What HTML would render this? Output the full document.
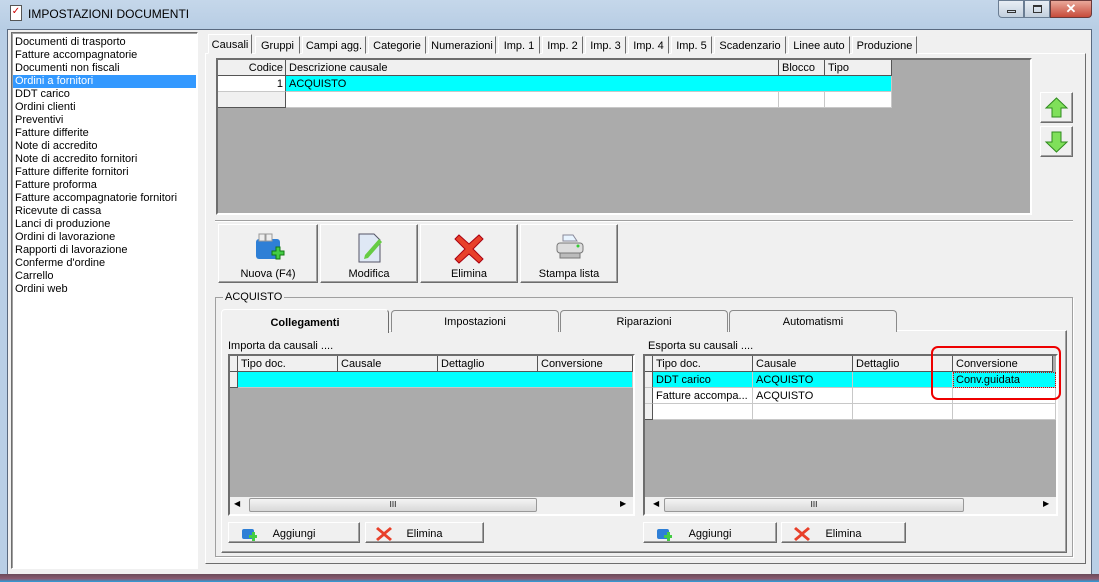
<!DOCTYPE html>
<html><head><meta charset="utf-8"><style>
*{box-sizing:border-box;margin:0;padding:0}
body{width:1099px;height:582px;overflow:hidden;background:#b9cfe6;font-family:"Liberation Sans",sans-serif;font-size:11px;color:#000;position:relative}
.a{position:absolute}
.btn{background:#f0f0f0;border:1px solid;border-color:#fff #6d6d6d #6d6d6d #fff;box-shadow:inset -1px -1px 0 #a0a0a0}
.grid{background:#ababab;border:2px solid;border-color:#6d6d6d #fff #fff #6d6d6d}
.c{position:absolute;border-right:1px solid #c8c8c8;border-bottom:1px solid #c8c8c8;padding-left:3px;line-height:16px;height:16px;white-space:nowrap;overflow:hidden}
.h{background:#f0f0f0;border-right:1px solid #555;border-bottom:1px solid #555}
.tab{position:absolute;top:36px;height:18px;line-height:19px;text-align:center;border:1px solid;border-color:#fff #6d6d6d transparent #fff;background:#f0f0f0;font-size:11px}
.st{position:absolute;top:310px;height:22px;line-height:23px;text-align:center;border:1px solid #8a8a8a;border-bottom:none;border-radius:4px 4px 0 0;background:#f0f0f0}
.sb{line-height:22px!important}
</style></head><body>
<div class="a" style="left:0;top:0;width:1099px;height:30px;background:linear-gradient(#c5d7ea,#b7cde4)"></div>
<div class="a" style="left:10px;top:5px;width:12px;height:16px;border:1px solid #555;background:#fff;color:#c00;font-size:10px;line-height:12px;text-align:center">✓</div>
<div class="a" style="left:28px;top:7px;font-size:12px">IMPOSTAZIONI DOCUMENTI</div>
<div class="a" style="left:998px;top:0;width:26px;height:18px;border:1px solid #6a7d93;border-radius:0 0 0 4px;background:linear-gradient(#e8eef5,#c3d0de)"><div class="a" style="left:8px;top:9px;width:9px;height:3px;border:1px solid #333"></div></div>
<div class="a" style="left:1024px;top:0;width:26px;height:18px;border:1px solid #6a7d93;background:linear-gradient(#e8eef5,#c3d0de)"><div class="a" style="left:8px;top:4px;width:9px;height:8px;border:1px solid #333;border-top-width:2px"></div></div>
<div class="a" style="left:1050px;top:0;width:42px;height:18px;border:1px solid #6a3a3a;border-radius:0 0 4px 0;background:linear-gradient(#e9a89a,#c74b3a);color:#fff;font-weight:bold;font-size:13px;text-align:center;line-height:16px">✕</div>
<div class="a" style="left:7px;top:29px;width:1085px;height:546px;background:#f0f0f0;border:1px solid #5a6a80"></div>
<div class="a" style="left:0;top:574px;width:1099px;height:8px;background:linear-gradient(#6a4a5a,#8a5a70 60%,#2aa0e0)"></div>

<div class="a" style="left:11px;top:32px;width:187px;height:537px;background:#fff;border:1px solid;border-color:#6d6d6d #fff #fff #6d6d6d;box-shadow:inset 1px 1px 0 #a0a0a0;line-height:13px;padding:3px 0 0 3px">
<div>Documenti di trasporto</div><div>Fatture accompagnatorie</div><div>Documenti non fiscali</div>
<div style="background:#3399ff;color:#fff;margin-left:-2px;padding-left:2px;width:183px">Ordini a fornitori</div>
<div>DDT carico</div><div>Ordini clienti</div><div>Preventivi</div><div>Fatture differite</div><div>Note di accredito</div><div>Note di accredito fornitori</div><div>Fatture differite fornitori</div><div>Fatture proforma</div><div>Fatture accompagnatorie fornitori</div><div>Ricevute di cassa</div><div>Lanci di produzione</div><div>Ordini di lavorazione</div><div>Rapporti di lavorazione</div><div>Conferme d'ordine</div><div>Carrello</div><div>Ordini web</div>
</div>

<div class="a" style="left:205px;top:53px;width:881px;height:511px;border:1px solid;border-color:#fff #6d6d6d #6d6d6d #fff"></div>
<div class="tab" style="left:208px;top:34px;width:44px;height:20px;border-bottom:1px solid #f0f0f0;line-height:21px">Causali</div>
<div class="tab" style="left:255px;width:45px">Gruppi</div>
<div class="tab" style="left:302px;width:64px">Campi agg.</div>
<div class="tab" style="left:368px;width:58px">Categorie</div>
<div class="tab" style="left:428px;width:68px">Numerazioni</div>
<div class="tab" style="left:498px;width:42px">Imp. 1</div>
<div class="tab" style="left:542px;width:41px">Imp. 2</div>
<div class="tab" style="left:585px;width:41px">Imp. 3</div>
<div class="tab" style="left:628px;width:41px">Imp. 4</div>
<div class="tab" style="left:671px;width:41px">Imp. 5</div>
<div class="tab" style="left:714px;width:72px">Scadenzario</div>
<div class="tab" style="left:788px;width:62px">Linee auto</div>
<div class="tab" style="left:852px;width:65px">Produzione</div>

<div class="a grid" style="left:216px;top:58px;width:816px;height:157px">
<div class="c h" style="left:0;top:0;width:68px;text-align:right;padding-right:2px">Codice</div>
<div class="c h" style="left:68px;top:0;width:493px">Descrizione causale</div>
<div class="c h" style="left:561px;top:0;width:46px">Blocco</div>
<div class="c h" style="left:607px;top:0;width:67px">Tipo</div>
<div class="c" style="left:0;top:16px;width:68px;background:#fff;text-align:right;padding-right:2px;border-right-color:#555">1</div>
<div class="c" style="left:68px;top:16px;width:606px;background:#0ff">ACQUISTO</div>
<div class="c" style="left:0;top:32px;width:68px;background:#f0f0f0;border-right-color:#555;border-bottom-color:#555"></div>
<div class="c" style="left:68px;top:32px;width:493px;background:#fff"></div>
<div class="c" style="left:561px;top:32px;width:46px;background:#fff"></div>
<div class="c" style="left:607px;top:32px;width:67px;background:#fff"></div>
</div>

<div class="a btn" style="left:1040px;top:92px;width:33px;height:31px"><svg width="31" height="29"><path d="M15.5 5 L26 15 H20 V24 H11 V15 H5 Z" fill="#7fe05a" stroke="#2f8a1e"/></svg></div>
<div class="a btn" style="left:1040px;top:126px;width:33px;height:31px"><svg width="31" height="29"><path d="M15.5 25 L26 15 H20 V5 H11 V15 H5 Z" fill="#7fe05a" stroke="#2f8a1e"/></svg></div>

<div class="a" style="left:215px;top:220px;width:858px;height:2px;border-top:1px solid #a0a0a0;border-bottom:1px solid #fff"></div>

<div class="a btn" style="left:218px;top:224px;width:100px;height:59px;text-align:center"><svg width="36" height="34" style="margin-top:6px"><rect x="6" y="8" width="24" height="20" rx="3" fill="#2e7fd6"/><rect x="9" y="3" width="6" height="7" fill="#eee" stroke="#999"/><rect x="16" y="3" width="6" height="7" fill="#eee" stroke="#999"/><path d="M22 20h4v-4h4v4h4v4h-4v4h-4v-4h-4z" fill="#4c4" stroke="#171"/></svg><div>Nuova (F4)</div></div>
<div class="a btn" style="left:320px;top:224px;width:98px;height:59px;text-align:center"><svg width="36" height="34" style="margin-top:6px"><path d="M8 3h15l6 6v22H8z" fill="#dfe8f5" stroke="#556"/><path d="M14 24l14-16 3 3-14 16-4 1z" fill="#6c4"/></svg><div>Modifica</div></div>
<div class="a btn" style="left:420px;top:224px;width:98px;height:59px;text-align:center"><svg width="36" height="34" style="margin-top:6px"><path d="M8 4l10 9 10-9 4 4-10 10 10 10-4 4-10-9-10 9-4-4 10-10-10-10z" fill="#e8402a" stroke="#a01"/></svg><div>Elimina</div></div>
<div class="a btn" style="left:520px;top:224px;width:98px;height:59px;text-align:center"><svg width="36" height="34" style="margin-top:6px"><path d="M12 4h10l4 6H12z" fill="#e8f4ff" stroke="#889"/><rect x="6" y="12" width="26" height="10" rx="3" fill="#ddd" stroke="#777"/><rect x="9" y="22" width="20" height="5" fill="#bbb" stroke="#777"/><circle cx="27" cy="15" r="1.5" fill="#3c3"/></svg><div>Stampa lista</div></div>

<div class="a" style="left:215px;top:297px;width:858px;height:260px;border:1px solid #a0a0a0;box-shadow:1px 1px 0 #fff"></div>
<div class="a" style="left:223px;top:291px;background:#f0f0f0;padding:0 2px">ACQUISTO</div>

<div class="a" style="left:221px;top:330px;width:846px;height:223px;border:1px solid;border-color:#fff #6d6d6d #6d6d6d #fff;box-shadow:inset -1px -1px 0 #a0a0a0"></div>
<div class="st" style="left:221px;top:309px;width:168px;height:24px;font-weight:bold;border-color:#fff #6d6d6d #f0f0f0 #fff;line-height:26px">Collegamenti</div>
<div class="st" style="left:391px;width:168px">Impostazioni</div>
<div class="st" style="left:560px;width:168px">Riparazioni</div>
<div class="st" style="left:729px;width:168px">Automatismi</div>

<div class="a" style="left:228px;top:340px">Importa da causali ....</div>
<div class="a grid" style="left:228px;top:354px;width:407px;height:162px">
<div class="c h" style="left:0;top:0;width:8px;padding:0"></div>
<div class="c h" style="left:8px;top:0;width:100px">Tipo doc.</div>
<div class="c h" style="left:108px;top:0;width:100px">Causale</div>
<div class="c h" style="left:208px;top:0;width:100px">Dettaglio</div>
<div class="c h" style="left:308px;top:0;width:95px">Conversione</div>
<div class="c" style="left:0;top:16px;width:8px;background:#f0f0f0;border-right-color:#555;border-bottom-color:#555;padding:0"></div>
<div class="c" style="left:8px;top:16px;width:395px;background:#0ff"></div>
<div class="a" style="left:0;top:141px;width:403px;height:17px;background:#f0f0f0"><span class="a" style="left:4px;top:2px;font-size:8px">◀</span><div class="a" style="left:19px;top:1px;width:288px;height:14px;border:1px solid #999;border-radius:2px;background:linear-gradient(#f4f4f4,#d8d8d8);text-align:center;font-size:8px;line-height:12px">III</div><span class="a" style="left:390px;top:2px;font-size:8px">▶</span></div>
</div>

<div class="a" style="left:648px;top:340px">Esporta su causali ....</div>
<div class="a grid" style="left:643px;top:354px;width:415px;height:162px">
<div class="c h" style="left:0;top:0;width:8px;padding:0"></div>
<div class="c h" style="left:8px;top:0;width:100px">Tipo doc.</div>
<div class="c h" style="left:108px;top:0;width:100px">Causale</div>
<div class="c h" style="left:208px;top:0;width:100px">Dettaglio</div>
<div class="c h" style="left:308px;top:0;width:100px">Conversione</div>
<div class="c" style="left:0;top:16px;width:8px;background:#f0f0f0;border-right-color:#555;padding:0"></div>
<div class="c" style="left:8px;top:16px;width:100px;background:#0ff">DDT carico</div>
<div class="c" style="left:108px;top:16px;width:100px;background:#0ff">ACQUISTO</div>
<div class="c" style="left:208px;top:16px;width:100px;background:#0ff"></div>
<div class="c" style="left:308px;top:16px;width:103px;background:#0ff;outline:1px dotted #c00;outline-offset:-1px">Conv.guidata</div>
<div class="c" style="left:0;top:32px;width:8px;background:#f0f0f0;border-right-color:#555;padding:0"></div>
<div class="c" style="left:8px;top:32px;width:100px;background:#fff">Fatture accompa...</div>
<div class="c" style="left:108px;top:32px;width:100px;background:#fff">ACQUISTO</div>
<div class="c" style="left:208px;top:32px;width:100px;background:#fff"></div>
<div class="c" style="left:308px;top:32px;width:103px;background:#fff"></div>
<div class="c" style="left:0;top:48px;width:8px;background:#f0f0f0;border-right-color:#555;border-bottom-color:#555;padding:0"></div>
<div class="c" style="left:8px;top:48px;width:100px;background:#fff"></div>
<div class="c" style="left:108px;top:48px;width:100px;background:#fff"></div>
<div class="c" style="left:208px;top:48px;width:100px;background:#fff"></div>
<div class="c" style="left:308px;top:48px;width:103px;background:#fff"></div>
<div class="a" style="left:0;top:141px;width:411px;height:17px;background:#f0f0f0"><span class="a" style="left:8px;top:2px;font-size:8px">◀</span><div class="a" style="left:19px;top:1px;width:300px;height:14px;border:1px solid #999;border-radius:2px;background:linear-gradient(#f4f4f4,#d8d8d8);text-align:center;font-size:8px;line-height:12px">III</div><span class="a" style="left:398px;top:2px;font-size:8px">▶</span></div>
</div>
<div class="a" style="left:931px;top:346px;width:130px;height:54px;border:2px solid #e00;border-radius:7px"></div>

<div class="a btn sb" style="left:228px;top:522px;width:132px;height:21px;text-align:center">Aggiungi<svg class="a" style="left:12px;top:2px" width="16" height="16"><rect x="1" y="4" width="12" height="10" rx="2" fill="#2e7fd6"/><path d="M8 10h3v-3h3v3h2v3h-2v3h-3v-3h-3z" fill="#4c4"/></svg></div>
<div class="a btn sb" style="left:365px;top:522px;width:119px;height:21px;text-align:center">Elimina<svg class="a" style="left:10px;top:2px" width="16" height="16"><path d="M2 2l6 5 6-5 2 2-6 5 6 5-2 2-6-5-6 5-2-2 6-5-6-5z" fill="#e8402a"/></svg></div>
<div class="a btn sb" style="left:643px;top:522px;width:134px;height:21px;text-align:center">Aggiungi<svg class="a" style="left:12px;top:2px" width="16" height="16"><rect x="1" y="4" width="12" height="10" rx="2" fill="#2e7fd6"/><path d="M8 10h3v-3h3v3h2v3h-2v3h-3v-3h-3z" fill="#4c4"/></svg></div>
<div class="a btn sb" style="left:781px;top:522px;width:125px;height:21px;text-align:center">Elimina<svg class="a" style="left:12px;top:2px" width="16" height="16"><path d="M2 2l6 5 6-5 2 2-6 5 6 5-2 2-6-5-6 5-2-2 6-5-6-5z" fill="#e8402a"/></svg></div>
</body></html>
